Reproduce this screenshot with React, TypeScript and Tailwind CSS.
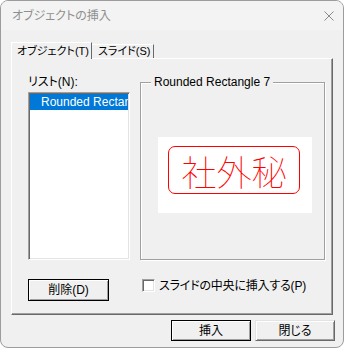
import React from 'react';

const ui = "font-['Liberation_Sans','Noto_Sans_CJK_JP',sans-serif] [font-feature-settings:'palt'] text-[12px] text-black";

function CloseIcon() {
  return (
    <svg width="10" height="10" viewBox="0 0 10 10" className="block">
      <path d="M0.5 0.5 L9.5 9.5 M9.5 0.5 L0.5 9.5" stroke="#8a8a8a" strokeWidth="1" fill="none" />
    </svg>
  );
}

function Button({ label, isDefault, className = '' }: { label: string; isDefault?: boolean; className?: string }) {
  return (
    <button
      className={`flex items-center justify-center bg-[#f0f0f0] ${ui} ${
        isDefault
          ? 'border border-black shadow-[inset_1px_1px_0_#ffffff,inset_-1px_-1px_0_#a0a0a0]'
          : 'border border-[#e3e3e3] border-r-[#696969] border-b-[#696969] shadow-[inset_1px_1px_0_#ffffff,inset_-1px_-1px_0_#a0a0a0]'
      } ${className}`}
    >
      {label}
    </button>
  );
}

export default function App() {
  return (
    <div className="w-[345px] h-[350px] bg-white">
      <div className={`w-[344px] h-[348px] rounded-[8px] border border-[#9c9c9c] bg-[#f0f0f0] flex flex-col overflow-hidden ${ui}`}>
        {/* title bar */}
        <div className="h-[29px] flex items-center justify-between pl-[11px] pr-[9px] bg-[#f3f3f3]">
          <span className="text-[#8f8f8f] text-[12px] leading-none">オブジェクトの挿入</span>
          <CloseIcon />
        </div>

        {/* tabs */}
        <div className="mt-[12px] h-[16px] flex items-end pl-[10px] relative z-10">
          <div className="shrink-0 w-[81px] h-[17px] -mb-[1px] bg-[#f0f0f0] border-l border-t border-white border-r border-r-[#696969] flex items-center pl-[5px] leading-none whitespace-nowrap text-[11px]">
            オブジェクト(T)
          </div>
          <div className="shrink-0 w-[62px] h-[14px] bg-[#f0f0f0] border-t border-white border-r border-r-[#696969] flex items-center pl-[6px] leading-none whitespace-nowrap text-[11px]">
            スライド(S)
          </div>
        </div>

        {/* panel */}
        <div className="mx-[10px] h-[257px] border border-white border-r-[#696969] border-b-[#696969] shadow-[inset_-1px_-1px_0_#a0a0a0] flex flex-col pt-[16px] pl-[16px]">
          <div className="flex items-start">
            <div className="flex flex-col">
              <div className="h-[14px] flex items-center leading-none">リスト(N):</div>
              <div className="mt-[3px] w-[102px] h-[168px] bg-white border border-[#a0a0a0] border-r-white border-b-white shadow-[inset_1px_1px_0_#696969,inset_-1px_-1px_0_#e3e3e3] p-[1px] overflow-hidden">
                <div className="h-[16px] bg-[#0078d7] text-white flex items-center pl-[11px] whitespace-nowrap overflow-hidden leading-none">
                  Rounded Rectangle 7
                </div>
              </div>
            </div>

            <div className="relative ml-[10px] mt-[7px] w-[185px] h-[178px] border border-[#a0a0a0] shadow-[inset_1px_1px_0_#ffffff,1px_1px_0_#ffffff] pt-[54px] pl-[17px]">
              <span className="absolute -top-[7px] left-[10px] px-[3px] bg-[#f0f0f0] leading-none">Rounded Rectangle 7</span>
              <div className="w-[154px] h-[76px] bg-white pt-[9px] pl-[10px]">
                <div className="w-[132px] h-[48px] rounded-[7px] border border-[#ff0000] flex items-center justify-center">
                  <span className="font-['Noto_Sans_CJK_JP',sans-serif] font-thin text-[35px] leading-none text-[#ff0000] [font-feature-settings:normal]">
                    社外秘
                  </span>
                </div>
              </div>
            </div>
          </div>

          <div className="mt-[19px] flex items-start">
            <Button label="削除(D)" isDefault className="w-[81px] h-[22px]" />
            <div className="ml-[33px] flex items-center gap-[4px] h-[13px]">
              <div className="w-[13px] h-[13px] bg-white border border-[#a0a0a0] border-r-white border-b-white shadow-[inset_1px_1px_0_#696969,inset_-1px_-1px_0_#e3e3e3]" />
              <span className="leading-none tracking-[-0.2px]">スライドの中央に挿入する(P)</span>
            </div>
          </div>
        </div>

        {/* bottom buttons */}
        <div className="mt-[5px] flex justify-end gap-[4px] pr-[8px]">
          <Button label="挿入" isDefault className="w-[80px] h-[21px]" />
          <Button label="閉じる" className="w-[80px] h-[21px]" />
        </div>
      </div>
    </div>
  );
}
